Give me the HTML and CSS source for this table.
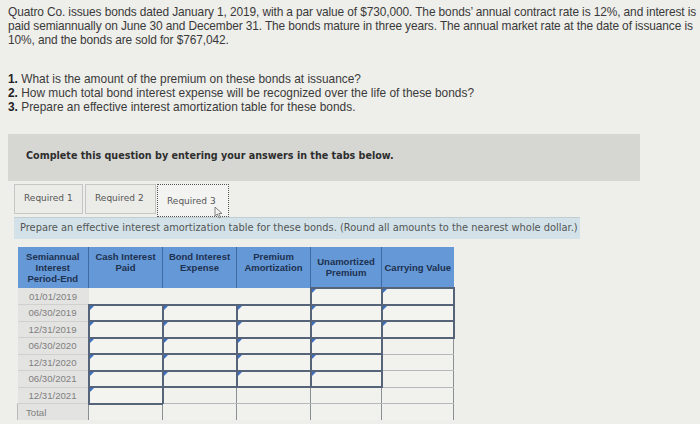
FILE: index.html
```html
<!DOCTYPE html>
<html>
<head>
<meta charset="utf-8">
<link rel="stylesheet" href="styles.css">
</head>
<body>
<div class="page">
  <p class="intro">Quatro Co. issues bonds dated January 1, 2019, with a par value of $730,000. The bonds’ annual contract rate is 12%, and interest is paid semiannually on June 30 and December 31. The bonds mature in three years. The annual market rate at the date of issuance is 10%, and the bonds are sold for $767,042.</p>
  <ol class="questions">
    <li><b>1.</b> What is the amount of the premium on these bonds at issuance?</li>
    <li><b>2.</b> How much total bond interest expense will be recognized over the life of these bonds?</li>
    <li><b>3.</b> Prepare an effective interest amortization table for these bonds.</li>
  </ol>
  <div class="complete">Complete this question by entering your answers in the tabs below.</div>
  <div class="tabs">
    <div class="tab">Required 1</div>
    <div class="tab">Required 2</div>
    <div class="tab active">Required 3<svg class="cursor" width="9" height="13" viewBox="0 0 9 13"><path d="M1 1 L1 10 L3.2 8 L5 12 L6.5 11.3 L4.8 7.5 L8 7.5 Z" fill="#f4f4f2" stroke="#777" stroke-width="0.9" stroke-linejoin="round"/></svg></div>
  </div>
  <div class="instr">Prepare an effective interest amortization table for these bonds. (Round all amounts to the nearest whole dollar.)</div>
  <table class="amort">
    <colgroup>
      <col class="c1"><col class="c2"><col class="c3"><col class="c4"><col class="c5"><col class="c6">
    </colgroup>
    <thead>
      <tr>
        <th>Semiannual<br>Interest<br>Period-End</th>
        <th class="top">Cash Interest<br>Paid</th>
        <th class="top">Bond Interest<br>Expense</th>
        <th class="top">Premium<br>Amortization</th>
        <th>Unamortized<br>Premium</th>
        <th>Carrying Value</th>
      </tr>
    </thead>
    <tbody>
      <tr><td class="date">01/01/2019</td><td class="blank"></td><td class="blank"></td><td class="blank"></td><td class="in"></td><td class="in"></td></tr>
      <tr><td class="date">06/30/2019</td><td class="in"></td><td class="in"></td><td class="in"></td><td class="in"></td><td class="in"></td></tr>
      <tr><td class="date">12/31/2019</td><td class="in"></td><td class="in"></td><td class="in"></td><td class="in"></td><td class="in"></td></tr>
      <tr><td class="date">06/30/2020</td><td class="in"></td><td class="in"></td><td class="in"></td><td class="in"></td><td class="plain"></td></tr>
      <tr><td class="date">12/31/2020</td><td class="in"></td><td class="in"></td><td class="in"></td><td class="in"></td><td class="plain"></td></tr>
      <tr><td class="date">06/30/2021</td><td class="in"></td><td class="in"></td><td class="in"></td><td class="in"></td><td class="plain"></td></tr>
      <tr><td class="date">12/31/2021</td><td class="in"></td><td class="plain"></td><td class="plain"></td><td class="plain"></td><td class="plain"></td></tr>
      <tr class="total"><td class="date tot">Total</td><td class="plain"></td><td class="plain"></td><td class="plain"></td><td class="plain"></td><td class="plain"></td></tr>
    </tbody>
  </table>
</div>
</body>
</html>
```

FILE: styles.css
```css
html, body {
  margin: 0;
  padding: 0;
  background: #eeeeea;
}
.page {
  width: 700px;
  height: 424px;
  overflow: hidden;
  padding: 5px 0 0 8px;
  box-sizing: border-box;
  color: #3a3a3a;
  font-family: "Liberation Sans", Arial, sans-serif;
}
.intro {
  margin: 0;
  width: 690px;
  font-size: 11.9px;
  line-height: 14px;
  letter-spacing: -0.1px;
}
.questions {
  list-style: none;
  margin: 25px 0 0 0;
  padding: 0;
  font-size: 11.9px;
  line-height: 14px;
}
.questions b { color: #222; }
.complete {
  margin-top: 20px;
  width: 632px;
  height: 47px;
  background: #d6d6d3;
  box-sizing: border-box;
  padding: 16px 0 0 18px;
  font-family: "DejaVu Sans", Verdana, sans-serif;
  font-weight: bold;
  font-size: 9.6px;
  color: #2e2e2e;
}
.tabs {
  display: flex;
  align-items: flex-start;
  margin: 3px 0 0 6px;
  height: 32px;
}
.tab {
  height: 30px;
  box-sizing: border-box;
  border: 1px solid #c6c6c4;
  background: #ebebe8;
  padding: 8px 0 0 9px;
  font-family: "DejaVu Sans", Verdana, sans-serif;
  font-size: 9px;
  color: #555;
}
.tab:nth-child(1) { width: 69px; }
.tab:nth-child(2) { width: 71px; margin-left: 2px; }
.tab.active {
  position: relative;
  width: 72px;
  height: 33px;
  margin-left: 1px;
  border: 1px dotted #555;
  background: #f3f3f1;
  padding-top: 11px;
}
.cursor {
  position: absolute;
  left: 56px;
  top: 21px;
}
.instr {
  margin: 1px 0 0 6px;
  width: 566px;
  height: 22px;
  background: #d2e2e8;
  border-top: 1px solid #c0cdd2;
  box-sizing: border-box;
  padding: 4px 0 0 6px;
  font-family: "DejaVu Sans", Verdana, sans-serif;
  font-size: 9.85px;
  color: #555;
  white-space: nowrap;
}
.amort {
  margin: 8px 0 0 9px;
  border-collapse: collapse;
  table-layout: fixed;
  width: 436px;
  font-family: "Liberation Sans", Arial, sans-serif;
}
.c1 { width: 71px; }
.c2 { width: 74px; }
.c3 { width: 74px; }
.c4 { width: 74px; }
.c5 { width: 71px; }
.c6 { width: 72px; }
.amort th {
  background: #6598d6;
  color: #1d3150;
  font-size: 9.5px;
  line-height: 11px;
  font-weight: bold;
  height: 37px;
  padding: 0;
  border-left: 1px solid #3f6aa3;
  text-align: center;
  vertical-align: middle;
}
.amort th:first-child { border-left: none; }
.amort th.top { vertical-align: top; padding-top: 4px; }
.amort td {
  height: 16.5px;
  padding: 0;
  box-sizing: border-box;
  position: relative;
}
.amort td.date {
  background: #e3e3e1;
  color: #808080;
  font-size: 9.6px;
  text-align: center;
  border-bottom: 1px solid #d0d0ce;
}
.amort td.tot {
  text-align: left;
  padding-left: 8px;
  border-bottom: none;
  border-left: 1px solid #bbb;
}
.amort td.blank {
  background: #f1f1ee;
}
.amort td.in {
  background: #f3f3f0;
  border: 2px solid #56647a;
}
.amort td.in::before {
  content: "";
  position: absolute;
  left: 0;
  top: 0;
  width: 0;
  height: 0;
  border-top: 4px solid #3a6fc2;
  border-right: 4px solid transparent;
}
.amort td.plain {
  background: #f1f1ee;
  border-left: 1px solid #8a8f96;
  border-right: 1px solid #8a8f96;
  border-bottom: 1px solid #b6b8bb;
}
.amort tr.total td.plain { border-bottom: none; }
```
